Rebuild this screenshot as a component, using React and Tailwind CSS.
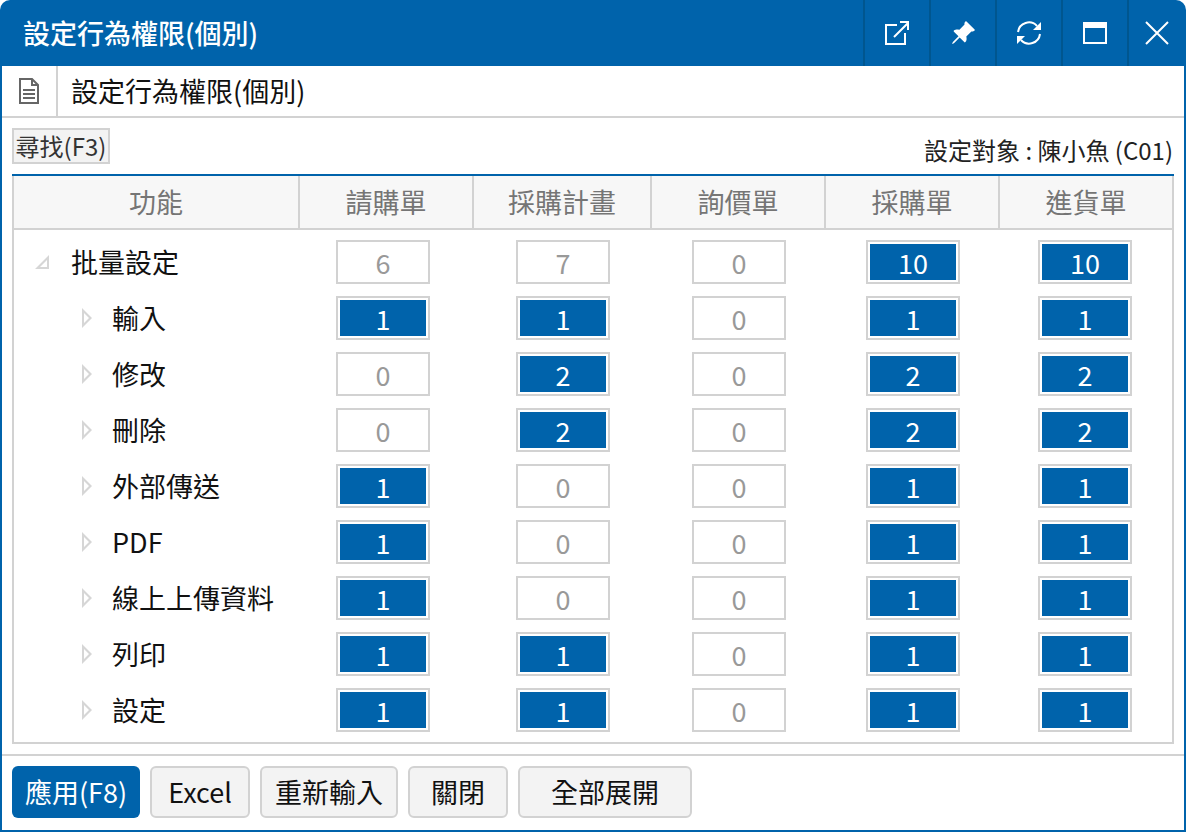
import { BsPinAngleFill } from "react-icons/bs";

const font = { fontFamily: '"Noto Sans CJK TC", "Noto Sans", sans-serif' };

const columns = ["請購單", "採購計畫", "詢價單", "採購單", "進貨單"];

const rows = [
  { name: "批量設定", values: [6, 7, 0, 10, 10], parent: true, active: [0, 0, 0, 1, 1] },
  { name: "輸入", values: [1, 1, 0, 1, 1] },
  { name: "修改", values: [0, 2, 0, 2, 2] },
  { name: "刪除", values: [0, 2, 0, 2, 2] },
  { name: "外部傳送", values: [1, 0, 0, 1, 1] },
  { name: "PDF", values: [1, 0, 0, 1, 1] },
  { name: "線上上傳資料", values: [1, 0, 0, 1, 1] },
  { name: "列印", values: [1, 1, 0, 1, 1] },
  { name: "設定", values: [1, 1, 0, 1, 1] },
];

function TitleButton({ children }) {
  return (
    <div className="w-[66px] h-full flex items-center justify-center border-l-2 border-[#00568f]">
      {children}
    </div>
  );
}

function ValueBox({ value, active }) {
  return (
    <div className="w-[94px] h-[44px] border-2 border-[#d2d2d2] p-[2px] bg-white">
      <div
        className={
          active
            ? "w-full h-full bg-[#0063ab] text-white flex items-center justify-center text-[27px] leading-none"
            : "w-full h-full text-[#999999] flex items-center justify-center text-[27px] leading-none"
        }
      >
        {value}
      </div>
    </div>
  );
}

function Row({ row }) {
  return (
    <div className="grid grid-cols-[322px_180px_176px_174px_172px_94px] h-[44px]">
      <div className="flex items-center text-[27px] text-[#111111]">
        {row.parent ? (
          <svg width="16" height="16" viewBox="0 0 16 16" className="ml-[20px] mr-[21px]">
            <path d="M15 1 V15 H1 Z M13 6 L6 13 H13 Z" fill="#d6d6d6" fillRule="evenodd" />
          </svg>
        ) : (
          <svg width="12" height="22" viewBox="0 0 12 22" className="ml-[67px] mr-[19px]">
            <path d="M1 1 L11 11 L1 21 Z M3 6 V16 L8 11 Z" fill="#d6d6d6" fillRule="evenodd" />
          </svg>
        )}
        {row.name}
      </div>
      {row.values.map((value, i) => (
        <ValueBox
          key={i}
          value={value}
          active={row.active ? row.active[i] === 1 : value > 0}
        />
      ))}
    </div>
  );
}

function FooterButton({ children, width, primary }) {
  return (
    <button
      className={
        primary
          ? `${width} h-[52px] rounded-[6px] bg-[#0063ab] text-white text-[27px] flex items-center justify-center`
          : `${width} h-[52px] rounded-[6px] bg-[#f3f3f3] border-2 border-[#d2d2d2] text-[#111111] text-[27px] flex items-center justify-center`
      }
    >
      {children}
    </button>
  );
}

export default function App() {
  return (
    <div className="w-[1186px] h-[832px] bg-white" style={font}>
      <div className="w-full h-full bg-[#0063ab] rounded-t-[10px] flex flex-col overflow-hidden">
        <div className="h-[66px] flex items-center shrink-0">
          <div className="flex-1 pl-[23px] text-white text-[27px] font-medium">設定行為權限(個別)</div>
          <TitleButton>
            <svg width="26" height="26" viewBox="0 0 26 26" fill="none" stroke="white" strokeWidth="2">
              <path d="M13 5 H2 V24 H21 V13" />
              <path d="M10 17 L24 3 M16 2 H24 V10" />
            </svg>
          </TitleButton>
          <TitleButton>
            <BsPinAngleFill size={26} color="white" />
          </TitleButton>
          <TitleButton>
            <svg width="26" height="26" viewBox="0 0 26 26" fill="none" stroke="white" strokeWidth="2">
              <path d="M2 12 A11 11 0 0 1 21 6" />
              <path d="M24 14 A11 11 0 0 1 5 20" />
              <path d="M25 2 V10 H17 Z M1 24 V16 H9 Z" fill="white" stroke="none" />
            </svg>
          </TitleButton>
          <TitleButton>
            <svg width="24" height="24" viewBox="0 0 24 24" fill="none" stroke="white" strokeWidth="2">
              <rect x="1" y="2" width="22" height="20" />
              <rect x="1" y="2" width="22" height="4" fill="white" />
            </svg>
          </TitleButton>
          <div className="w-[59px] h-full flex items-center justify-center border-l-2 border-[#00568f] pr-[2px]">
            <svg width="26" height="26" viewBox="0 0 26 26" stroke="white" strokeWidth="2">
              <path d="M2 2 L24 24 M24 2 L2 24" />
            </svg>
          </div>
        </div>

        <div className="mx-[2px] mb-[2px] flex-1 bg-white flex flex-col min-h-0">
          <div className="h-[52px] shrink-0 flex border-b-2 border-[#d2d2d2]">
            <div className="w-[56px] flex items-center justify-center border-r-2 border-[#d2d2d2]">
              <svg width="20" height="26" viewBox="0 0 20 26" fill="none" stroke="#666666" strokeWidth="2">
                <path d="M1 1 H13 L19 7 V25 H1 Z M13 1 V7 H19" />
                <path d="M4 12 H16 M4 16 H16 M4 20 H16" />
              </svg>
            </div>
            <div className="pl-[13px] flex items-center text-[27px] text-[#111111]">設定行為權限(個別)</div>
          </div>

          <div className="h-[56px] shrink-0 flex justify-between px-[10px] pt-[10px]">
            <button className="h-[36px] w-[98px] bg-[#f3f3f3] border-2 border-[#d2d2d2] text-[24px] leading-none text-[#333333] flex items-center justify-center">
              尋找(F3)
            </button>
            <div className="text-[24px] leading-none text-[#222222] mt-[10px] pr-[1px]">設定對象 : 陳小魚 (C01)</div>
          </div>

          <div className="mx-[10px] h-[570px] shrink-0 border-2 border-t-0 border-[#d2d2d2] flex flex-col">
            <div className="-mx-[2px] h-[2px] bg-[#0063ab] shrink-0"></div>
            <div className="h-[54px] shrink-0 -ml-0 grid grid-cols-[284px_174px_178px_174px_174px_1fr] bg-[#f7f7f7] border-b-2 border-[#d2d2d2] text-[27px] text-[#757575]">
              <div className="flex items-center justify-center">功能</div>
              {columns.map((c) => (
                <div key={c} className="flex items-center justify-center border-l-2 border-[#d2d2d2]">
                  {c}
                </div>
              ))}
            </div>
            <div className="pt-[10px] flex flex-col gap-[12px]">
              {rows.map((row) => (
                <Row key={row.name} row={row} />
              ))}
            </div>
          </div>

          <div className="mt-[10px] border-t-2 border-[#d2d2d2] flex-1 flex gap-[10px] pl-[10px] pt-[10px]">
            <FooterButton width="w-[128px]" primary>應用(F8)</FooterButton>
            <FooterButton width="w-[100px]">Excel</FooterButton>
            <FooterButton width="w-[138px]">重新輸入</FooterButton>
            <FooterButton width="w-[100px]">關閉</FooterButton>
            <FooterButton width="w-[174px]">全部展開</FooterButton>
          </div>
        </div>
      </div>
    </div>
  );
}
